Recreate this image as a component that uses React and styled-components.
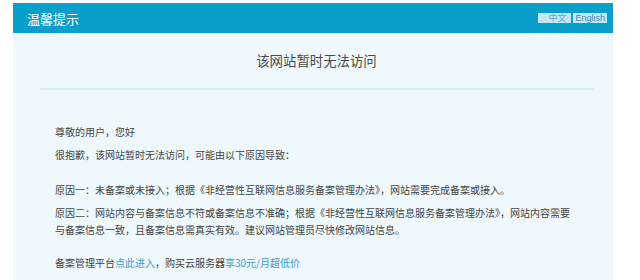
import React from 'react';
import styled, { createGlobalStyle } from 'styled-components';

const GlobalStyle = createGlobalStyle`
  html, body {
    margin: 0;
    padding: 0;
    background: #ffffff;
  }
  body {
    font-family: "Noto Sans CJK SC", "Noto Sans", sans-serif;
  }
`;

const Page = styled.div`
  padding: 3px 0 0 13px;
  height: 277px;
  overflow: hidden;
`;

const Panel = styled.div`
  width: 600px;
  height: 300px;
  background: #eef8fd;
`;

const Header = styled.div`
  height: 30px;
  background: #0a9fca;
  display: flex;
  align-items: center;
  justify-content: space-between;
  padding: 0 6px 0 14px;
`;

const HeaderTitle = styled.div`
  color: #ffffff;
  font-size: 13px;
`;

const LangSwitch = styled.div`
  display: flex;
  gap: 2px;
`;

const LangButton = styled.span`
  background: #c4e6f4;
  color: ${(p) => (p.$active ? '#5aa9cf' : '#3c8db5')};
  font-size: 9px;
  line-height: 10px;
  padding: 0 ${(p) => (p.$active ? '5px 0 10px' : '2px')};
  font-family: "Liberation Sans", "Noto Sans CJK SC", sans-serif;
`;

const Title = styled.h1`
  margin: 0 20px 0 27px;
  height: 55px;
  line-height: 55px;
  text-align: center;
  font-weight: normal;
  font-size: 13.4px;
  color: #4a4a4a;
  border-bottom: 2px solid #d3edf6;
`;

const Body = styled.div`
  padding: 33px 0 0 42px;
  width: 521px;
`;

const Para = styled.p`
  margin: 0 0 ${(p) => p.$gap || 6}px;
  font-size: 10px;
  line-height: 17px;
  color: #444444;
`;

const Link = styled.a`
  color: #3a9ad0;
  text-decoration: none;
`;

export default function App() {
  return (
    <>
      <GlobalStyle />
      <Page>
        <Panel>
          <Header>
            <HeaderTitle>温馨提示</HeaderTitle>
            <LangSwitch>
              <LangButton $active>中文</LangButton>
              <LangButton>English</LangButton>
            </LangSwitch>
          </Header>
          <Title>该网站暂时无法访问</Title>
          <Body>
            <Para>尊敬的用户，您好</Para>
            <Para $gap={18}>很抱歉，该网站暂时无法访问，可能由以下原因导致：</Para>
            <Para>原因一：未备案或未接入；根据《非经营性互联网信息服务备案管理办法》，网站需要完成备案或接入。</Para>
            <Para $gap={16}>
              原因二：网站内容与备案信息不符或备案信息不准确；根据《非经营性互联网信息服务备案管理办法》，网站内容需要与备案信息一致，且备案信息需真实有效。建议网站管理员尽快修改网站信息。
            </Para>
            <Para>
              备案管理平台<Link href="#">点此进入</Link>，购买云服务器<Link href="#">享30元/月超低价</Link>
            </Para>
          </Body>
        </Panel>
      </Page>
    </>
  );
}
